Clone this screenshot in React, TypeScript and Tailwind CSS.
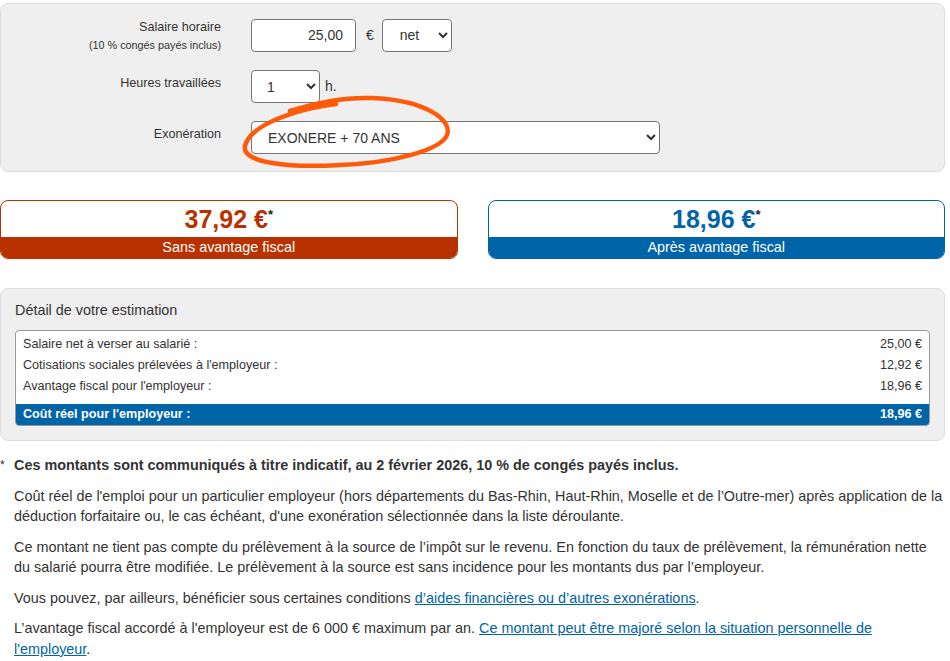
import React from 'react';

const font = { fontFamily: '"Liberation Sans", Arial, sans-serif' };

function ResultCard({ amount, label, tone }: { amount: string; label: string; tone: 'orange' | 'blue' }) {
  const border = tone === 'orange' ? 'border-[#b83200]' : 'border-[#0064a8]';
  const text = tone === 'orange' ? 'text-[#b83200]' : 'text-[#0064a8]';
  const band = tone === 'orange' ? 'bg-[#b83200]' : 'bg-[#0064a8]';
  return (
    <div className={`border ${border} rounded-[8px] overflow-hidden bg-white`}>
      <div className="h-[36px] flex items-start justify-center">
        <span className={`${text} text-[25px] font-bold leading-[36px]`}>
          {amount}
          <sup className="text-[#222] text-[13px] font-bold relative -top-[9px]">*</sup>
        </span>
      </div>
      <div className={`${band} h-[21px] text-white text-[14.4px] leading-[21px] text-center`}>{label}</div>
    </div>
  );
}

export default function App() {
  const rows = [
    ['Salaire net à verser au salarié :', '25,00 €'],
    ['Cotisations sociales prélevées à l\'employeur :', '12,92 €'],
    ['Avantage fiscal pour l\'employeur :', '18,96 €'],
  ];

  return (
    <div className="relative w-[950px] h-[661px] overflow-hidden bg-white text-[#333]" style={font}>
      {/* simulator form */}
      <div className="mt-[3px] w-[945px] bg-[#efefef] border border-[#dddddd] rounded-[8px] pt-[14px] pb-[17px]">
        <div className="grid grid-cols-[220px_1fr] gap-x-[30px] gap-y-[18px]">
          <div className="text-right">
            <div className="text-[12.6px] leading-[18px]">Salaire horaire</div>
            <div className="text-[10.8px] leading-[14px] mt-[2px]">(10 % congés payés inclus)</div>
          </div>
          <div className="flex items-center">
            <input
              readOnly
              value="25,00"
              className="w-[105px] h-[33px] bg-white border border-[#767676] rounded-[4px] text-right pr-[12px] text-[14px] text-[#333]"
              style={font}
            />
            <span className="ml-[10px] mr-[8px] text-[14px]">€</span>
            <select
              defaultValue="net"
              className="w-[70px] h-[33px] bg-white border border-[#767676] rounded-[4px] pl-[13px] text-[14px] text-[#333]"
              style={font}
            >
              <option value="net">net</option>
              <option value="brut">brut</option>
            </select>
          </div>

          <div className="text-right text-[12.6px] leading-[18px] pt-[4px]">Heures travaillées</div>
          <div className="flex items-center">
            <select
              defaultValue="1"
              className="w-[69px] h-[33px] bg-white border border-[#767676] rounded-[4px] pl-[11px] text-[14px] text-[#333]"
              style={font}
            >
              <option value="1">1</option>
              <option value="2">2</option>
            </select>
            <span className="ml-[5px] text-[14px]">h.</span>
          </div>

          <div className="text-right text-[12.6px] leading-[18px] pt-[4px]">Exonération</div>
          <div className="flex items-center">
            <select
              defaultValue="70"
              className="w-[409px] h-[33px] bg-white border border-[#767676] rounded-[4px] pl-[12px] text-[14px] text-[#333]"
              style={font}
            >
              <option value="70">EXONERE + 70 ANS</option>
              <option value="none">Aucune</option>
            </select>
          </div>
        </div>
      </div>

      {/* results */}
      <div className="w-[945px] mt-[28px] grid grid-cols-2 gap-x-[30px]">
        <ResultCard amount="37,92 €" label="Sans avantage fiscal" tone="orange" />
        <ResultCard amount="18,96 €" label="Après avantage fiscal" tone="blue" />
      </div>

      {/* detail */}
      <div className="mt-[29px] w-[945px] bg-[#efefef] border border-[#dddddd] rounded-[8px] px-[14px] pt-[12px] pb-[14px]">
        <div className="text-[14.4px] leading-[18px] mb-[11px]">Détail de votre estimation</div>
        <div className="bg-white border border-[#999] rounded-[4px] overflow-hidden">
          <div className="pt-[3px] pb-[7px]">
            {rows.map(([k, v]) => (
              <div key={k} className="flex justify-between px-[7px] text-[12.6px] leading-[21px]">
                <span>{k}</span>
                <span>{v}</span>
              </div>
            ))}
          </div>
          <div className="flex justify-between px-[7px] bg-[#0064a8] text-white text-[12.6px] font-bold leading-[21px]">
            <span>Coût réel pour l'employeur :</span>
            <span>18,96 €</span>
          </div>
        </div>
      </div>

      {/* notes */}
      <div className="mt-[14px] w-[945px] text-[14.4px] leading-[20.5px]">
        <div className="flex">
          <span className="w-[14px] shrink-0 text-[12px]">*</span>
          <span className="font-bold">Ces montants sont communiqués à titre indicatif, au 2 février 2026, 10 % de congés payés inclus.</span>
        </div>
        <div className="pl-[14px]">
          <p className="mt-[10px]">
            Coût réel de l'emploi pour un particulier employeur (hors départements du Bas-Rhin, Haut-Rhin, Moselle et de l’Outre-mer) après application de la déduction forfaitaire ou, le cas échéant, d'une exonération sélectionnée dans la liste déroulante.
          </p>
          <p className="mt-[10px]">
            Ce montant ne tient pas compte du prélèvement à la source de l’impôt sur le revenu. En fonction du taux de prélèvement, la rémunération nette du salarié pourra être modifiée. Le prélèvement à la source est sans incidence pour les montants dus par l’employeur.
          </p>
          <p className="mt-[10px]">
            Vous pouvez, par ailleurs, bénéficier sous certaines conditions{' '}
            <a href="#" className="text-[#0064a8] underline">d’aides financières ou d’autres exonérations</a>.
          </p>
          <p className="mt-[10px]">
            L’avantage fiscal accordé à l'employeur est de 6 000 € maximum par an.{' '}
            <a href="#" className="text-[#0064a8] underline">Ce montant peut être majoré selon la situation personnelle de l'employeur</a>.
          </p>
        </div>
      </div>

      {/* hand-drawn highlight around the exoneration select */}
      <svg className="absolute left-0 top-0 pointer-events-none" width="950" height="200" viewBox="0 0 950 200">
        <path
          d="M 336 104 C 300 108 250 124 245 146 C 241 163 290 168 340 165 C 393 163 441 150 447 135 C 453 120 425 100 372 98 C 342 97 312 104 290 111"
          fill="none"
          stroke="#ff5a0a"
          strokeWidth="4.5"
          strokeLinecap="round"
        />
      </svg>
    </div>
  );
}
